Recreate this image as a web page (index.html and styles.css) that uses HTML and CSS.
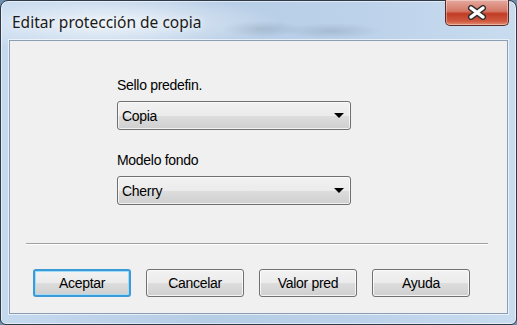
FILE: index.html
```html
<!DOCTYPE html>
<html lang="es">
<head>
  <meta charset="UTF-8" />
  <title>Editar protección de copia</title>
  <link rel="stylesheet" href="styles.css">
</head>
<body>
  <div class="window">
    <div class="titlebar">
      <span class="title">Editar protección de copia</span>
      <button class="close-btn" aria-label="Cerrar">
        <svg width="20" height="15" viewBox="0 0 20 15">
          <path d="M4 3 L16 12 M16 3 L4 12" stroke="#2f2f2f" stroke-width="6" stroke-linecap="round"/>
          <path d="M4 3 L16 12 M16 3 L4 12" stroke="#ffffff" stroke-width="3.4" stroke-linecap="round"/>
        </svg>
      </button>
    </div>

    <div class="client">
      <div class="fields">
        <label class="field-label">Sello predefin.</label>
        <div class="combo">
          <span>Copia</span>
          <span class="arrow"></span>
        </div>

        <label class="field-label second">Modelo fondo</label>
        <div class="combo">
          <span>Cherry</span>
          <span class="arrow"></span>
        </div>
      </div>

      <hr class="separator">

      <div class="buttons">
        <button class="btn default">Aceptar</button>
        <button class="btn">Cancelar</button>
        <button class="btn">Valor pred</button>
        <button class="btn">Ayuda</button>
      </div>
    </div>
  </div>
</body>
</html>
```

FILE: styles.css
```css
/* Dialogo estilo Windows 7 */
:root {
  --client-bg: #f0f0f0;
  --ctrl-border: #707070;
  --focus-border: #3c7fb1;
}
html, body {
  margin: 0;
  padding: 0;
  width: 517px;
  height: 325px;
  overflow: hidden;
  background: #6f8fae;
}
.window {
  box-sizing: border-box;
  width: 517px;
  height: 325px;
  border: 1px solid #2e3a48;
  border-radius: 8px 8px 6px 6px;
  padding: 0 8px 10px 8px;
  display: flex;
  flex-direction: column;
  background:
    radial-gradient(ellipse 170px 30px at 110px 22px, rgba(255,255,255,0.75), rgba(255,255,255,0) 100%),
    radial-gradient(ellipse 40px 8px at 260px 28px, rgba(120,140,160,0.35), rgba(120,140,160,0) 100%),
    radial-gradient(ellipse 50px 8px at 330px 30px, rgba(120,140,160,0.3), rgba(120,140,160,0) 100%),
    linear-gradient(to right, #c5d9ee 0%, #b6cde6 40%, #bcd2ea 70%, #c9dcef 100%);
  box-shadow: inset 0 0 0 1px rgba(255,255,255,0.55);
}
.titlebar {
  height: 39px;
  display: flex;
  justify-content: space-between;
  align-items: flex-start;
  flex-shrink: 0;
}
.title {
  margin-top: 10px;
  margin-left: 3px;
  font-family: "Noto Sans", "DejaVu Sans", sans-serif;
  font-size: 15.5px;
  color: #1a1a1a;
  text-shadow: 0 0 6px rgba(255,255,255,0.9);
}
.close-btn {
  width: 64px;
  height: 26px;
  margin-top: -1px;
  margin-right: -1px;
  padding: 0;
  border: 1px solid #5a2b26;
  border-top: none;
  border-radius: 0 0 5px 5px;
  background: linear-gradient(to bottom, #e5a99e 0%, #d47766 45%, #c23b25 55%, #cf5a40 85%, #e58f74 100%);
  box-shadow: inset 0 0 0 1px rgba(255,255,255,0.35);
  display: flex;
  align-items: center;
  justify-content: center;
}
.client {
  flex: 1;
  background: var(--client-bg);
  border: 1px solid #8b9eb3;
  box-shadow: 0 0 0 1px rgba(255,255,255,0.6);
  font-family: "Liberation Sans", Arial, sans-serif;
  font-size: 14px;
  color: #000;
  display: flex;
  flex-direction: column;
}
.fields {
  margin-left: 107px;
  width: 234px;
  display: flex;
  flex-direction: column;
  padding-top: 36px;
}
.field-label {
  line-height: 16px;
  margin-bottom: 8px;
  letter-spacing: -0.3px;
}
.field-label.second {
  margin-top: 22px;
}
.combo {
  box-sizing: border-box;
  height: 29px;
  border: 1px solid var(--ctrl-border);
  border-radius: 3px;
  background: linear-gradient(to bottom, #f2f2f2 0%, #ebebeb 50%, #dddddd 51%, #cfcfcf 100%);
  box-shadow: inset 0 0 0 1px rgba(255,255,255,0.7);
  display: flex;
  align-items: center;
  justify-content: space-between;
  padding: 0 6px 0 4px;
  letter-spacing: -0.3px;
}
.arrow {
  width: 0;
  height: 0;
  border-left: 5px solid transparent;
  border-right: 5px solid transparent;
  border-top: 5px solid #000;
}
.separator {
  margin: 38px 19px 0 16px;
  border: none;
  border-top: 1px solid #a0a0a0;
  border-bottom: 1px solid #ffffff;
  height: 0;
}
.buttons {
  display: flex;
  gap: 15px;
  margin: 24px 0 0 23px;
}
.btn {
  box-sizing: border-box;
  width: 98px;
  height: 28px;
  border: 1px solid var(--ctrl-border);
  border-radius: 3px;
  background: linear-gradient(to bottom, #f2f2f2 0%, #ebebeb 50%, #dddddd 51%, #cfcfcf 100%);
  box-shadow: inset 0 0 0 1px rgba(255,255,255,0.75);
  font-family: "Liberation Sans", Arial, sans-serif;
  font-size: 14px;
  letter-spacing: -0.3px;
  color: #000;
  padding: 0;
}
.btn.default {
  border: 2px solid #3c9ad6;
  box-shadow: inset 0 0 0 1px #9fdcf8;
}
```
